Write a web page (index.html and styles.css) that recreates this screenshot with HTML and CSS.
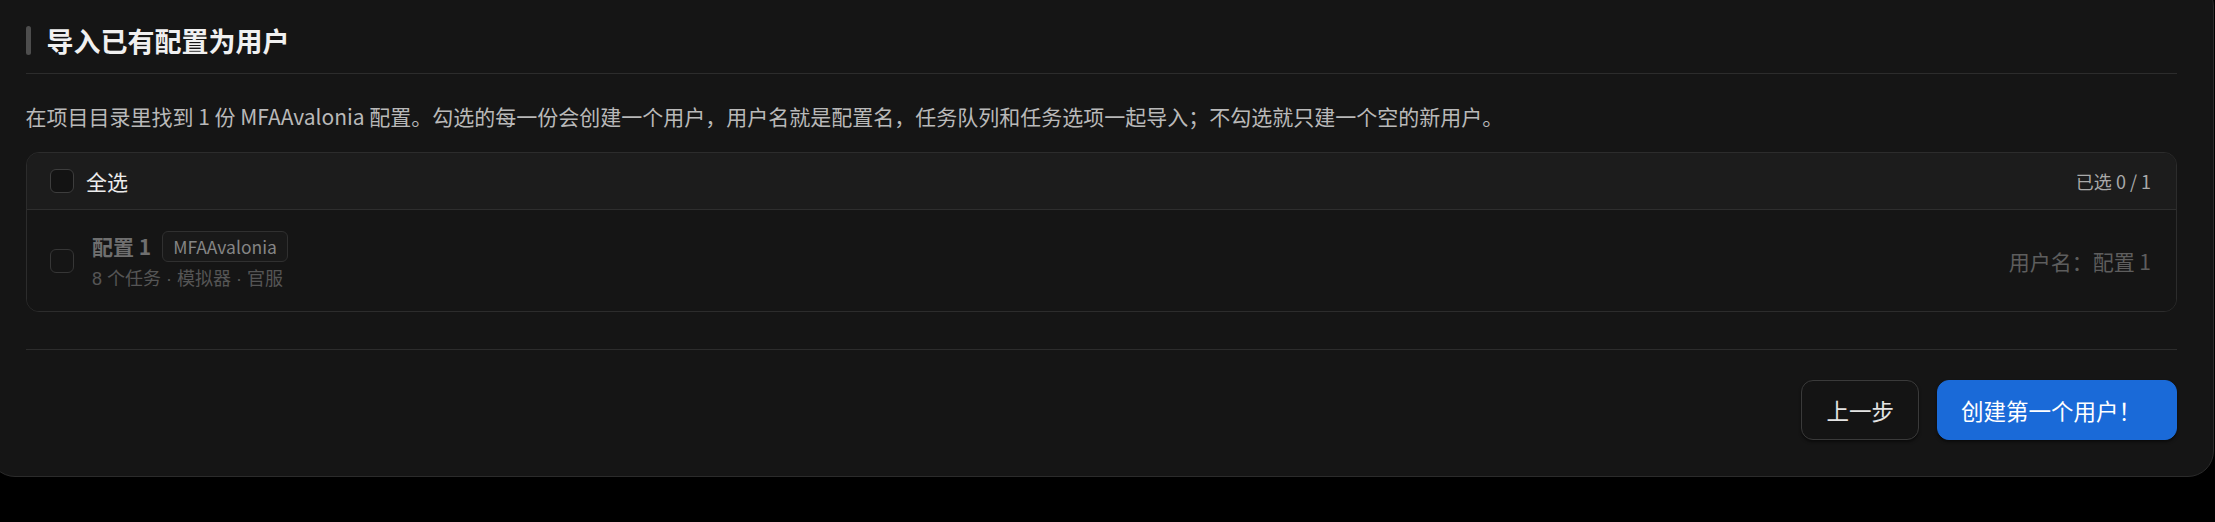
FILE: index.html
```html
<!DOCTYPE html>
<html lang="zh-CN">
<head>
<meta charset="utf-8">
<title>导入已有配置为用户</title>
<link rel="stylesheet" href="styles.css">
</head>
<body>
<div class="panel">
  <div class="head">
    <span class="head-bar"></span>
    <h2 class="head-title">导入已有配置为用户</h2>
  </div>
  <p class="desc">在项目目录里找到 1 份 MFAAvalonia 配置。勾选的每一份会创建一个用户，用户名就是配置名，任务队列和任务选项一起导入；不勾选就只建一个空的新用户。</p>
  <div class="list">
    <div class="list-head">
      <label class="check-label">
        <span class="check"></span>
        <span class="all-text">全选</span>
      </label>
      <span class="count">已选 0 / 1</span>
    </div>
    <div class="item">
      <span class="check check-row"></span>
      <div class="item-main">
        <div class="item-title-line">
          <span class="item-title">配置 1</span>
          <span class="tag">MFAAvalonia</span>
        </div>
        <div class="item-sub">8 个任务 · 模拟器 · 官服</div>
      </div>
      <span class="item-user">用户名：配置 1</span>
    </div>
  </div>
  <div class="footer">
    <button class="btn btn-secondary">上一步</button>
    <button class="btn btn-primary">创建第一个用户！</button>
  </div>
</div>
</body>
</html>
```

FILE: styles.css
```css
* { box-sizing: border-box; }

html, body {
  margin: 0;
  padding: 0;
  background: #000;
  overflow: hidden;
}

body {
  font-family: "Noto Sans CJK SC", "Noto Sans", sans-serif;
  color: #e6e6e6;
  width: 2215px;
  height: 522px;
}

.panel {
  margin-top: -20px;
  margin-left: -11px;
  width: 2225px;
  background: #151515;
  border: 1px solid #2b2b2b;
  border-radius: 26px;
  padding: 41px 36px 36px 35.5px;
}

.head {
  display: flex;
  align-items: center;
  gap: 16px;
  height: 52px;
  padding-bottom: 15px;
  border-bottom: 1px solid #2c2c2c;
}

.head-bar {
  width: 5px;
  height: 29px;
  border-radius: 3px;
  background: #4d4d4d;
}

.head-title {
  margin: 0;
  font-size: 27px;
  line-height: 37px;
  font-weight: 700;
  color: #f0f0f0;
}

.desc {
  margin: 27px 0 0;
  font-size: 21px;
  line-height: 30px;
  color: #b9b9b9;
}

.list {
  margin-top: 21px;
  border: 1px solid #2c2c2c;
  border-radius: 13px;
  overflow: hidden;
}

.list-head {
  display: flex;
  align-items: center;
  justify-content: space-between;
  height: 57px;
  padding: 0 25px 0 23.5px;
  background: #1c1c1c;
  border-bottom: 1px solid #2e2e2e;
}

.check-label {
  display: flex;
  align-items: center;
  gap: 12px;
}

.check {
  width: 24px;
  height: 24px;
  border: 1.5px solid #3d3d3d;
  border-radius: 6px;
  background: #131313;
  flex: none;
}

.all-text {
  font-size: 21px;
  line-height: 30px;
  color: #ececec;
}

.count {
  font-size: 18px;
  line-height: 26px;
  color: #a9a9a9;
}

.item {
  display: flex;
  align-items: center;
  height: 101px;
  padding: 0 25px 0 23.5px;
  background: #151515;
}

.check-row {
  border-color: #363636;
  background: #151515;
}

.item-main {
  display: flex;
  flex-direction: column;
  gap: 5px;
  margin-left: 18px;
  flex: 1;
}

.item-title-line {
  display: flex;
  align-items: center;
  gap: 11px;
  height: 32px;
}

.item-title {
  font-size: 21px;
  font-weight: 700;
  line-height: 30px;
  color: #6f6f6f;
}

.tag {
  display: inline-flex;
  align-items: center;
  height: 31px;
  padding: 0 10px;
  border: 1px solid #303030;
  border-radius: 6px;
  background: #191919;
  font-size: 17.5px;
  color: #858585;
}

.item-sub {
  font-family: "Liberation Sans", "Noto Sans CJK SC", sans-serif;
  font-size: 18px;
  line-height: 24px;
  color: #555;
}

.item-user {
  font-size: 21px;
  line-height: 30px;
  color: #5d5d5d;
}

.footer {
  display: flex;
  justify-content: flex-end;
  gap: 18px;
  margin-top: 37px;
  padding-top: 30px;
  border-top: 1px solid #2c2c2c;
}

.btn {
  height: 60px;
  border-radius: 12px;
  font-family: inherit;
  font-size: 22.5px;
  line-height: 30px;
  cursor: pointer;
  box-shadow: 0 2px 3px rgba(0, 0, 0, 0.5);
}

.btn-secondary {
  padding: 0 24px;
  background: #141414;
  border: 1.5px solid #3a3a3a;
  color: #e4e4e4;
}

.btn-primary {
  padding: 0 35px 0 23px;
  background: #1a6ad8;
  border: 1px solid #1a6ad8;
  color: #fff;
}
```
